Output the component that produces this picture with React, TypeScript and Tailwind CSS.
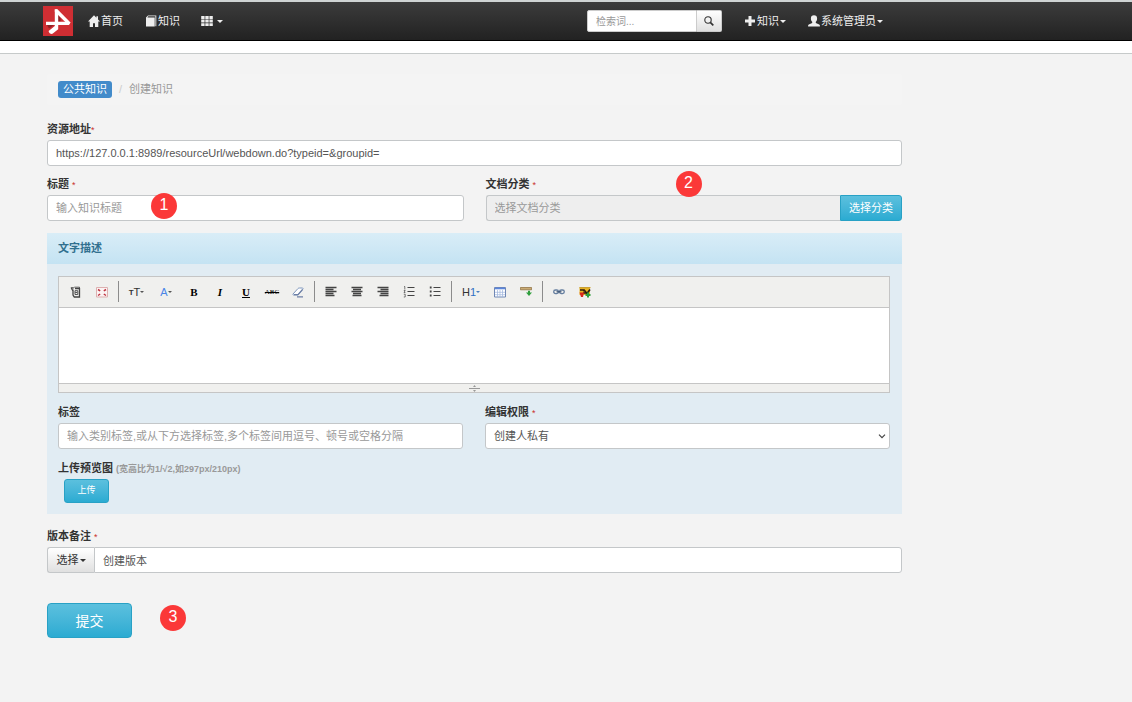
import type { ReactNode } from 'react';

const labelClasses = 'mb-0.5 block h-[18px] text-[11px] leading-[18px] font-bold text-[#333]';
const inputClasses =
  'block h-[26px] w-full min-w-0 rounded-[3px] border border-[#c4c7c9] bg-white px-2 ' +
  'text-[11px] text-[#555] placeholder:text-[#999] outline-none';
const infoButtonClasses =
  'shrink-0 border border-[#28a1c5] bg-linear-to-b from-[#5bc0de] to-[#2aabd2] text-white';

function Caret({ className = 'h-[3px] w-[6px]' }: { className?: string }) {
  return (
    <svg viewBox="0 0 6 3" className={`shrink-0 ${className}`} fill="currentColor" aria-hidden="true">
      <path d="M0 0h6L3 3z" />
    </svg>
  );
}

function Required() {
  return <span className="text-[9px] leading-none font-normal text-[#c9302c]">*</span>;
}

// Numbered red marker for a step of the walkthrough.
function Step({ n, className = '' }: { n: number; className?: string }) {
  return (
    <span
      className={`flex size-[26px] items-center justify-center rounded-full bg-[#fb3838] pb-0.5 text-base leading-none text-white ${className}`}
    >
      {n}
    </span>
  );
}

function Logo() {
  return (
    <svg viewBox="0 0 30 30" className="size-[30px]" aria-hidden="true">
      <path fill="#cf2e33" d="M0 0h30v30H0z" />
      <path fill="#8f2226" d="M15 9l2.500 2.500v4H15zM4 19h7l-5 3.500z" />
      <path fill="#fff" d="M3 15.800h21.500l3 .6-1.500 2.700H3z" />
      <path fill="#fff" d="M11.800 3.200l2.400-.2L27.500 16.400l-2.700 2L11.800 5.800z" />
      <path fill="#fff" d="M11.800 3.200l3.400 2.600v17.400L9.500 27.800c-1.800.4-3.600-.8-3.900-2.900l6.200-5z" />
    </svg>
  );
}

function HomeIcon() {
  return (
    <svg viewBox="0 0 12 12" className="size-3" fill="currentColor" aria-hidden="true">
      <path d="M6 .3L0 6.600h1.700V12H5V8.200h2V12h3.300V6.600H12L10 4.400V1.200H8.400v1.600z" />
    </svg>
  );
}

function BookIcon() {
  return (
    <svg viewBox="0 0 12 12" className="size-3" fill="currentColor" aria-hidden="true">
      <path d="M3 .5h8.300v10.700h-.9V1.300H3.200l-.8 1.100h7.300v9.100H1V2.600z" />
    </svg>
  );
}

function GridIcon() {
  return (
    <svg viewBox="0 0 12 12" className="size-3" fill="currentColor" aria-hidden="true">
      <path d="M.2 1h3.400v2.900H.2zM4.300 1h3.400v2.900H4.300zM8.400 1h3.400v2.900H8.400zM.2 4.600h3.400v2.900H.2zM4.300 4.600h3.400v2.900H4.300zM8.400 4.600h3.400v2.900H8.400zM.2 8.200h3.400v2.900H.2zM4.300 8.200h3.400v2.900H4.300zM8.400 8.200h3.400v2.900H8.400z" />
    </svg>
  );
}

function PlusIcon() {
  return (
    <svg viewBox="0 0 12 12" className="size-3" fill="currentColor" aria-hidden="true">
      <path d="M4.500 1h3v3.500H11v3H7.500V11h-3V7.500H1v-3h3.500z" />
    </svg>
  );
}

function UserIcon() {
  return (
    <svg viewBox="0 0 12 12" className="size-3" fill="currentColor" aria-hidden="true">
      <path d="M6 .3c2 0 3.100 1.200 3.100 3.200 0 1.400-.5 2.600-1.300 3.300v1.100l3.400 1.600c.4.200.7.500.7 1v1H.1v-1c0-.5.300-.8.700-1l3.400-1.600V6.800c-.8-.7-1.300-1.900-1.300-3.300 0-2 1.100-3.200 3.100-3.200z" />
    </svg>
  );
}

function SearchIcon() {
  return (
    <svg viewBox="0 0 10 10" className="size-[10px]" fill="none" stroke="currentColor" aria-hidden="true">
      <circle cx="4" cy="4" r="3.200" strokeWidth="1.100" />
      <path d="M6.300 6.300L9.300 9.300" strokeWidth="1.700" />
    </svg>
  );
}

function Tool({ label, wide = 'w-[26px]', children }: { label: string; wide?: string; children: ReactNode }) {
  return (
    <button
      type="button"
      aria-label={label}
      className={`flex h-6 shrink-0 items-center justify-center text-[#333] ${wide}`}
    >
      {children}
    </button>
  );
}

function Divider() {
  return <span className="mx-[3px] mb-0.5 h-[21px] w-px shrink-0 bg-[#8c8c8c]" />;
}

function Glyph({ children }: { children: ReactNode }) {
  return (
    <svg viewBox="0 0 12 12" className="size-3" fill="none" stroke="#444" aria-hidden="true">
      {children}
    </svg>
  );
}

function Toolbar() {
  return (
    <div className="flex h-[31px] items-center overflow-hidden border-b border-[#c5c5c5] bg-[#f0f0ee] pl-1">
      <Tool label="源码">
        <Glyph>
          <path d="M.8 1.800h3M3 3.500v5.500l1.300 2h5.200V2.600H5M1.500 2.500L3 5" strokeWidth="1.300" />
          <path d="M4.300 1.200h5.200v1.400M5 4.700h2.800v3.800H5zM5.200 6.500h2" strokeWidth=".9" />
        </Glyph>
      </Tool>
      <Tool label="全屏">
        <Glyph>
          <path d="M.5 1.500h11v9.500H.5z" stroke="#dcb0b0" fill="#fbf3f3" />
          <path d="M2 3.500l2.200 1.300M10 3.500L7.800 4.800M2 9.500l2.200-1.500M10 9.500L7.800 8" stroke="#bf3440" strokeWidth="1.500" />
        </Glyph>
      </Tool>
      <Divider />
      <Tool label="字号" wide="w-[29px]">
        <span className="pt-0.5 text-[8px] leading-none font-bold">T</span>
        <span className="text-[11px] leading-none">T</span>
        <Caret className="h-[2px] w-[4px] text-[#555]" />
      </Tool>
      <Tool label="文字颜色" wide="w-[30px]">
        <span className="text-[11px] leading-none text-[#4a86e8]">A</span>
        <Caret className="h-[2px] w-[4px] text-[#555]" />
      </Tool>
      <Tool label="加粗">
        <span className="font-['Liberation_Serif',serif] text-[11px] font-bold text-black">B</span>
      </Tool>
      <Tool label="斜体">
        <span className="font-['Liberation_Serif',serif] text-[11px] font-bold text-black italic">I</span>
      </Tool>
      <Tool label="下划线">
        <span className="font-['Liberation_Serif',serif] text-[11px] font-bold text-black underline">U</span>
      </Tool>
      <Tool label="删除线">
        <span className="font-['Liberation_Serif',serif] text-[7px] text-black line-through">ABC</span>
      </Tool>
      <Tool label="清除格式">
        <Glyph>
          <path d="M1 8l5-5.500c.4-.4.800-.5 1.300-.5h3c.8 0 1 .6.500 1.200L6 9H1.800C1 9 .6 8.500 1 8z" fill="#fff" stroke="#7f97bd" />
          <path d="M2 8.600h4L10.500 3.500M5 10.800h6" stroke="#6d7fa5" strokeWidth="1.200" />
        </Glyph>
      </Tool>
      <Divider />
      <Tool label="左对齐">
        <Glyph>
          <path d="M.5 1.500h11M.5 3.500h8M.5 5.500h11M.5 7.500h8M.5 9.500h9" strokeWidth="1.300" />
        </Glyph>
      </Tool>
      <Tool label="居中">
        <Glyph>
          <path d="M.5 1.500h11M2 3.500h8M.5 5.500h11M2 7.500h8M1.500 9.500h9" strokeWidth="1.300" />
        </Glyph>
      </Tool>
      <Tool label="右对齐">
        <Glyph>
          <path d="M.5 1.500h11M3.500 3.500h8M.5 5.500h11M3.500 7.500h8M2.500 9.500h9" strokeWidth="1.300" />
        </Glyph>
      </Tool>
      <Tool label="编号">
        <Glyph>
          <path d="M4.500 1.500h7M4.500 5.500h7M4.500 9.500h7" strokeWidth="1.200" />
          <path d="M1 .5h.8v3M.8 4.500h1.400L1 6.500h1.400M.8 8.200h1.400v2.800H.8" strokeWidth=".7" />
        </Glyph>
      </Tool>
      <Tool label="项目符号">
        <Glyph>
          <path d="M4.500 1.500h7M4.500 5.500h7M4.500 9.500h7" strokeWidth="1.200" />
          <path d="M.8 1.500h1.800M.8 5.500h1.800M.8 9.500h1.800" strokeWidth="1.800" />
        </Glyph>
      </Tool>
      <Divider />
      <Tool label="标题" wide="w-8">
        <span className="text-[11px] leading-none">H</span>
        <span className="text-[11px] leading-none text-[#2f6fc4]">1</span>
        <Caret className="h-[2px] w-[4px] text-[#4a7fc0]" />
      </Tool>
      <Tool label="表格">
        <Glyph>
          <path d="M.5 1.500h11v9.500H.5z" fill="#fff" stroke="#6f87b4" />
          <path d="M1 2.500h10" stroke="#5b86dc" strokeWidth="1.600" />
          <path d="M3.500 4v7M6 4v7M8.500 4v7M1 6.300h10M1 8.700h10" stroke="#9db4dd" strokeWidth=".7" />
        </Glyph>
      </Tool>
      <Tool label="分隔线">
        <Glyph>
          <path d="M.4 1.500h11.200v2.300H.4z" fill="#c9ab74" stroke="#8a6a3a" strokeWidth=".7" />
          <path d="M9 4.800V7.500" stroke="#2f9e3c" strokeWidth="2" />
          <path d="M6 6.500h6L9 10z" fill="#2f9e3c" stroke="none" />
        </Glyph>
      </Tool>
      <Divider />
      <Tool label="链接">
        <Glyph>
          <rect x=".7" y="4" width="4.800" height="3.600" rx="1.800" stroke="#667f9f" strokeWidth="1.300" />
          <rect x="6.500" y="4" width="4.800" height="3.600" rx="1.800" stroke="#667f9f" strokeWidth="1.300" />
          <path d="M3.500 5.800h5" stroke="#3f5675" strokeWidth="1.200" />
        </Glyph>
      </Tool>
      <Tool label="图片">
        <Glyph>
          <path d="M.5 2h10.500v7H.5z" fill="#e8b523" stroke="none" />
          <path d="M.3 1.600h11.200" stroke="#caa033" strokeWidth="1.200" />
          <path d="M1 4h4v1.500M5.500 4.500l2.500 3 3-4M4 7h3" stroke="#2b1a10" strokeWidth="1.700" />
          <path d="M.5 6.500h4.500L4 11H2z" fill="#d7281e" stroke="none" />
          <path d="M9 6.500v5M6.500 9h5" stroke="#2f9e3c" strokeWidth="2" />
        </Glyph>
      </Tool>
    </div>
  );
}

function Header() {
  return (
    <header className="border-t-2 border-[#cfd4d4]">
      <div className="border-b border-black bg-linear-to-b from-[#3c3c3c] to-[#222]">
        <nav className="flex h-[38px] max-w-[883px] items-center justify-between pl-[43px] text-[11px] text-[#eee]">
          <div className="flex items-center">
            <a href="#" aria-label="主页">
              <Logo />
            </a>
            <a href="#" className="ml-[15px] flex items-center gap-px">
              <HomeIcon />
              首页
            </a>
            <a href="#" className="ml-[22px] flex items-center gap-px">
              <BookIcon />
              知识
            </a>
            <button type="button" aria-label="应用" className="ml-[21px] flex items-center gap-1">
              <GridIcon />
              <Caret />
            </button>
          </div>
          <div className="flex items-center">
            <form className="flex">
              <input
                type="text"
                aria-label="检索词"
                placeholder="检索词..."
                className="h-[22px] w-[110px] rounded-l-[2px] border border-[#ccc] bg-white px-2 text-[10px] text-[#555] outline-none placeholder:text-[#999]"
              />
              <button
                type="button"
                aria-label="搜索"
                className="flex h-[22px] w-[25px] items-center justify-center rounded-r-[2px] border border-l-0 border-[#ccc] bg-linear-to-b from-white to-[#e0e0e0] text-[#333]"
              >
                <SearchIcon />
              </button>
            </form>
            <button type="button" className="ml-[22px] flex items-center gap-px">
              <PlusIcon />
              知识
              <Caret />
            </button>
            <button type="button" className="ml-[22px] flex items-center gap-px">
              <UserIcon />
              系统管理员
              <Caret />
            </button>
          </div>
        </nav>
      </div>
      <div className="h-[13px] border-b border-[#c6caca] bg-white" />
    </header>
  );
}

export default function App() {
  return (
    <div className="min-h-screen bg-[#f3f3f3] font-['Liberation_Sans','Noto_Sans_CJK_SC',sans-serif] text-[#333]">
      <Header />
      <main className="px-[47px] pt-5 pb-10">
        <div className="max-w-[855px]">
          <nav className="mb-[15px] flex h-[31px] items-center rounded-[3px] bg-[#f4f4f4] px-[11px] text-[11px]">
            <a href="#" className="flex h-[17px] items-center rounded-[3px] bg-[#428bca] px-[5px] text-white">
              公共知识
            </a>
            <span className="px-[7px] text-[#ccc]">/</span>
            <span className="text-[#999]">创建知识</span>
          </nav>

          <form>
            <div className="mb-[9px]">
              <label htmlFor="url" className={labelClasses}>
                资源地址
                <Required />
              </label>
              <input
                id="url"
                type="text"
                defaultValue="https://127.0.0.1:8989/resourceUrl/webdown.do?typeid=&groupid="
                className={inputClasses}
              />
            </div>

            <div className="mb-3 grid grid-cols-2 gap-[22px]">
              <div className="relative">
                <label htmlFor="title" className={labelClasses}>
                  标题 <Required />
                </label>
                <input id="title" type="text" placeholder="输入知识标题" className={inputClasses} />
                <Step n={1} className="absolute bottom-0.5 left-[104px]" />
              </div>
              <div className="relative">
                <label htmlFor="category" className={labelClasses}>
                  文档分类 <Required />
                </label>
                <div className="flex">
                  <input
                    id="category"
                    type="text"
                    readOnly
                    placeholder="选择文档分类"
                    className="block h-[26px] min-w-0 flex-1 rounded-l-[3px] border border-r-0 border-[#c4c7c9] bg-[#eee] px-2 text-[11px] outline-none placeholder:text-[#999]"
                  />
                  <button
                    type="button"
                    className={`${infoButtonClasses} h-[26px] rounded-r-[3px] px-2 text-[11px]`}
                  >
                    选择分类
                  </button>
                </div>
                <Step n={2} className="absolute -top-1 left-[190px]" />
              </div>
            </div>

            <section className="mb-[13px] bg-[#e1ecf3]">
              <h2 className="flex h-[31px] items-center bg-linear-to-b from-[#d9edf7] to-[#c4e3f3] px-[11px] text-[11px] font-bold text-[#31708f]">
                文字描述
              </h2>
              <div className="pt-3 pr-3 pb-[11px] pl-[11px]">
                <div className="mb-[10px] border border-[#c5c5c5] bg-white">
                  <Toolbar />
                  <textarea aria-label="文字描述" className="block h-[75px] w-full resize-none p-1 text-[11px] outline-none" />
                  <div className="flex h-[9px] items-center justify-center border-t border-[#c5c5c5] bg-[#f0f0ee]">
                    <svg viewBox="0 0 11 7" className="h-[7px] w-[11px]" fill="#999" aria-hidden="true">
                      <path d="M0 3h11v1H0zM4 2h3L5.500 0zM4 5h3L5.500 7z" />
                    </svg>
                  </div>
                </div>

                <div className="mb-[10px] grid grid-cols-2 gap-[22px]">
                  <div>
                    <label htmlFor="tags" className={labelClasses}>
                      标签
                    </label>
                    <input
                      id="tags"
                      type="text"
                      placeholder="输入类别标签,或从下方选择标签,多个标签间用逗号、顿号或空格分隔"
                      className={inputClasses}
                    />
                  </div>
                  <div>
                    <label htmlFor="permission" className={labelClasses}>
                      编辑权限 <Required />
                    </label>
                    <div className="relative">
                      <select id="permission" className={`${inputClasses} appearance-none`}>
                        <option>创建人私有</option>
                      </select>
                      <svg
                        viewBox="0 0 8 5"
                        className="pointer-events-none absolute top-[11px] right-1 h-[5px] w-2"
                        fill="none"
                        stroke="#444"
                        strokeWidth="1.200"
                        aria-hidden="true"
                      >
                        <path d="M1 .7l3 3 3-3" />
                      </svg>
                    </div>
                  </div>
                </div>

                <label htmlFor="upload" className={labelClasses}>
                  上传预览图 <span className="text-[9px] leading-none text-[#999]">(宽高比为1/√2,如297px/210px)</span>
                </label>
                <button
                  id="upload"
                  type="button"
                  className={`${infoButtonClasses} ml-[6px] block h-6 w-[45px] rounded-[3px] text-[9px]`}
                >
                  上传
                </button>
              </div>
            </section>

            <label htmlFor="note" className={labelClasses}>
              版本备注 <Required />
            </label>
            <div className="mb-[30px] flex">
              <button
                type="button"
                className="flex h-[26px] w-[47px] shrink-0 items-center justify-center gap-px rounded-l-[3px] border border-r-0 border-[#c4c7c9] bg-linear-to-b from-white to-[#e0e0e0] text-[11px] text-[#333]"
              >
                选择
                <Caret />
              </button>
              <input
                id="note"
                type="text"
                defaultValue="创建版本"
                className="block h-[26px] min-w-0 flex-1 rounded-r-[3px] border border-[#c4c7c9] bg-white px-2 text-[11px] text-[#555] outline-none"
              />
            </div>

            <div className="flex items-start gap-7">
              <button type="button" className={`${infoButtonClasses} h-[35px] w-[85px] rounded-[4px] text-sm`}>
                提交
              </button>
              <Step n={3} className="mt-0.5" />
            </div>
          </form>
        </div>
      </main>
    </div>
  );
}
